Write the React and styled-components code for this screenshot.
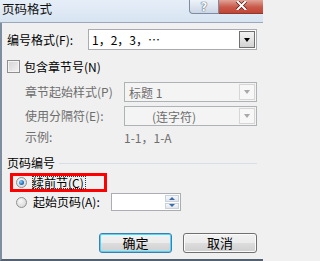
import React, { useState } from "react";
import styled, { createGlobalStyle } from "styled-components";

const GlobalStyle = createGlobalStyle`
  html, body {
    margin: 0;
    padding: 0;
    background: #f0f0f0;
  }
  body {
    font-family: "Noto Sans CJK SC", "Noto Sans", sans-serif;
    font-size: 12px;
  }
`;

const Dialog = styled.div`
  width: 263px;
  height: 261px;
  display: flex;
  flex-direction: column;
  overflow: hidden;
  background: #f0f0f0;
`;

const TitleBar = styled.div`
  height: 22px;
  flex-shrink: 0;
  display: flex;
  justify-content: space-between;
  align-items: flex-start;
  background: linear-gradient(#e6eef8, #d8e4f2);
  border-bottom: 1px solid #9aa8ba;
`;

const TitleText = styled.div`
  font-size: 12.5px;
  line-height: 18px;
  padding-left: 2px;
  color: #111;
`;

const WinButtons = styled.div`
  display: flex;
`;

const HelpBtn = styled.div`
  width: 28px;
  height: 13px;
  border: 1px solid #7d8ca2;
  border-top: none;
  border-radius: 0 0 0 4px;
  background: linear-gradient(#eef3f9, #cbd6e5);
  display: flex;
  align-items: center;
  justify-content: center;
  font: bold 12px "DejaVu Sans", sans-serif;
  line-height: 10px;
  color: #f6f8fb;
  text-shadow: 0 0 1px #3a4a60, 0 0 1px #3a4a60;
`;

const CloseBtn = styled.div`
  width: 44px;
  height: 13px;
  border-bottom: 1px solid #8a3a30;
  background: linear-gradient(#e0a396, #c9594a 55%, #c24433);
  display: flex;
  align-items: center;
  justify-content: center;

  svg {
    display: block;
    margin-top: -2px;
  }
`;

const Body = styled.div`
  flex: 1;
  display: flex;
  flex-direction: column;
  padding-left: 5px;
  border-left: 2px solid #7f8da0;
  border-bottom: 2px solid #55606e;
`;

const Row = styled.div`
  display: flex;
  align-items: center;
  height: ${(p) => p.h}px;
  margin-top: ${(p) => p.mt}px;
  padding-left: ${(p) => p.indent || 0}px;
`;

const Label = styled.div`
  width: ${(p) => p.w}px;
  flex-shrink: 0;
  white-space: nowrap;
  color: ${(p) => (p.disabled ? "#6d6d6d" : "#000")};
  line-height: 14px;
`;

const Value = styled.div`
  color: ${(p) => (p.disabled ? "#6d6d6d" : "#000")};
  white-space: nowrap;
`;

const Select = styled.div`
  width: ${(p) => p.w}px;
  height: 100%;
  box-sizing: border-box;
  border: 1px solid ${(p) => (p.disabled ? "#adb2b5" : "#a9abb0")};
  background: ${(p) => (p.disabled ? "#f4f4f4" : "#fff")};
  display: flex;
  align-items: center;
  padding: 1px;
`;

const SelectText = styled.div`
  flex: 1;
  padding-left: ${(p) => p.pl || 3}px;
  color: ${(p) => (p.disabled ? "#6d6d6d" : "#000")};
  white-space: nowrap;
`;

const DropBtn = styled.div`
  width: 16px;
  height: 100%;
  box-sizing: border-box;
  border: 1px solid ${(p) => (p.disabled ? "#d6d6d6" : "#707070")};
  background: ${(p) =>
    p.disabled ? "#f7f7f7" : "linear-gradient(#f3f3f3, #e4e4e4 50%, #d2d2d2)"};
  display: flex;
  align-items: center;
  justify-content: center;

  &::after {
    content: "";
    border-left: 3.5px solid transparent;
    border-right: 3.5px solid transparent;
    border-top: 4px solid ${(p) => (p.disabled ? "#a8a8a8" : "#000")};
  }
`;

const Check = styled.div`
  width: 13px;
  height: 13px;
  box-sizing: border-box;
  border: 1px solid #8e8f8f;
  background: linear-gradient(135deg, #d3d3d3, #f4f4f4);
  box-shadow: inset 0 0 0 1px #f4f4f4;
  margin-right: 4px;
  flex-shrink: 0;
`;

const GroupTitle = styled.div`
  display: flex;
  align-items: center;
  height: 14px;
  margin-top: 12px;
  gap: 4px;

  span {
    white-space: nowrap;
    line-height: 14px;
  }

  &::after {
    content: "";
    flex: 1;
    height: 1px;
    background: #d5dfe5;
    margin-right: 6px;
    margin-top: 1px;
  }
`;

const Marked = styled.div`
  display: inline-flex;
  align-items: center;
  align-self: flex-start;
  box-sizing: border-box;
  width: 97px;
  height: 19px;
  margin-top: 3px;
  margin-left: 3px;
  border: 3px solid #ff0000;
  padding-left: 3px;
`;

const Radio = styled.div`
  width: 11px;
  height: 11px;
  box-sizing: border-box;
  border-radius: 50%;
  border: 1px solid #8e8f8f;
  background: radial-gradient(circle at 40% 35%, #f8f8f8, #d0d0d0);
  margin-right: ${(p) => p.gap}px;
  flex-shrink: 0;
  display: flex;
  align-items: center;
  justify-content: center;

  &::after {
    content: "";
    display: ${(p) => (p.checked ? "block" : "none")};
    width: 5px;
    height: 5px;
    border-radius: 50%;
    background: radial-gradient(circle at 35% 35%, #8fd0ff, #1f6fc0 60%, #0d4a8a);
  }
`;

const FocusText = styled.span`
  outline: 1px dotted #333;
  outline-offset: -1px;
  padding-right: 2px;
  white-space: nowrap;
  line-height: 13px;
`;

const Spinner = styled.div`
  width: 70px;
  height: 18px;
  box-sizing: border-box;
  border: 1px solid #abadb3;
  background: #fff;
  display: flex;
  justify-content: flex-end;
  padding: 1px;
`;

const SpinBtns = styled.div`
  width: 14px;
  display: flex;
  flex-direction: column;
  gap: 1px;
`;

const SpinBtn = styled.div`
  flex: 1;
  border: 1px solid #c9d2dc;
  background: linear-gradient(#f6f8fa, #e2e7ec);
  display: flex;
  align-items: center;
  justify-content: center;

  &::after {
    content: "";
    border-left: 3px solid transparent;
    border-right: 3px solid transparent;
    ${(p) =>
      p.up
        ? "border-bottom: 3px solid #3d6ba8;"
        : "border-top: 3px solid #3d6ba8;"}
  }
`;

const ButtonRow = styled.div`
  display: flex;
  gap: 11px;
  margin-top: 22px;
  padding-left: 92px;
`;

const Button = styled.button`
  width: ${(p) => p.w}px;
  height: 20px;
  box-sizing: border-box;
  padding: 0;
  border-radius: 3px;
  border: 1px solid ${(p) => (p.primary ? "#3c7fb1" : "#707070")};
  box-shadow: inset 0 0 0 1px ${(p) => (p.primary ? "#48d8fb" : "#fbfbfb")};
  background: linear-gradient(#f2f2f2, #ebebeb 50%, #dddddd 51%, #cfcfcf);
  font-family: "Noto Sans CJK SC", sans-serif;
  font-size: 13px;
  line-height: 16px;
  color: #000;
`;

export default function App() {
  const [mode, setMode] = useState("continue");

  return (
    <>
      <GlobalStyle />
      <Dialog>
        <TitleBar>
          <TitleText>页码格式</TitleText>
          <WinButtons>
            <HelpBtn>?</HelpBtn>
            <CloseBtn>
              <svg width="11" height="9" viewBox="0 0 11 9">
                <path
                  d="M1.5 0.5 L9.5 8.5 M9.5 0.5 L1.5 8.5"
                  stroke="#5a1a12"
                  strokeWidth="3.4"
                  strokeLinecap="square"
                />
                <path
                  d="M1.5 0.5 L9.5 8.5 M9.5 0.5 L1.5 8.5"
                  stroke="#fff"
                  strokeWidth="2"
                  strokeLinecap="square"
                />
              </svg>
            </CloseBtn>
          </WinButtons>
        </TitleBar>
        <Body>
          <Row h={21} mt={6}>
            <Label w={81}>编号格式(F):</Label>
            <Select w={169}>
              <SelectText pl={2}>1，2，3，⋯</SelectText>
              <DropBtn />
            </Select>
          </Row>

          <Row h={13} mt={10}>
            <Check />
            <Label>包含章节号(N)</Label>
          </Row>

          <Row h={20} mt={9} indent={18}>
            <Label w={99} disabled>
              章节起始样式(P)
            </Label>
            <Select w={133} disabled>
              <SelectText disabled>标题 1</SelectText>
              <DropBtn disabled />
            </Select>
          </Row>

          <Row h={20} mt={4} indent={18}>
            <Label w={99} disabled>
              使用分隔符(E):
            </Label>
            <Select w={133} disabled>
              <SelectText pl={26} disabled>
                (连字符)
              </SelectText>
              <DropBtn disabled />
            </Select>
          </Row>

          <Row h={14} mt={4} indent={18}>
            <Label w={99} disabled>
              示例:
            </Label>
            <Value disabled>1-1，1-A</Value>
          </Row>

          <GroupTitle>
            <span>页码编号</span>
          </GroupTitle>

          <Marked onClick={() => setMode("continue")}>
            <Radio checked={mode === "continue"} gap={5} />
            <FocusText>续前节(C)</FocusText>
          </Marked>

          <Row h={18} mt={1} indent={9}>
            <Radio
              checked={mode === "start"}
              gap={6}
              onClick={() => setMode("start")}
            />
            <Label w={78}>起始页码(A):</Label>
            <Spinner>
              <SpinBtns>
                <SpinBtn up />
                <SpinBtn />
              </SpinBtns>
            </Spinner>
          </Row>

          <ButtonRow>
            <Button primary w={73}>
              确定
            </Button>
            <Button w={74}>取消</Button>
          </ButtonRow>
        </Body>
      </Dialog>
    </>
  );
}
